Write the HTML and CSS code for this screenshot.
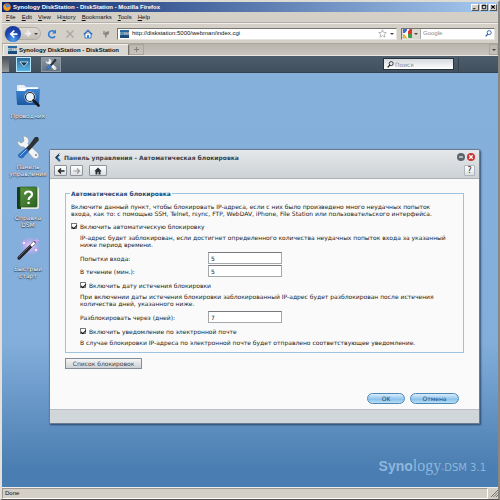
FILE: index.html
```html
<!DOCTYPE html>
<html lang="ru">
<head>
    <meta charset="UTF-8">
    <meta name="viewport" content="width=device-width, initial-scale=1.0">
    <title>Synology DiskStation - DiskStation</title>
    <link rel="stylesheet" href="styles.css">
</head>
<body>
    <!-- Shared icons -->
    <svg class="defs" aria-hidden="true">
        <defs>
            <linearGradient id="folder" x1="0" y1="0" x2="0" y2="1">
                <stop offset="0" stop-color="#3f86cf"/>
                <stop offset="1" stop-color="#1c57a4"/>
            </linearGradient>
            <linearGradient id="book" x1="0" y1="0" x2="1" y2="1">
                <stop offset="0" stop-color="#5d9540"/>
                <stop offset="1" stop-color="#2b6420"/>
            </linearGradient>
            <radialGradient id="glow">
                <stop offset="0" stop-color="#f2d5ff"/>
                <stop offset="1" stop-color="#c79cf0" stop-opacity="0"/>
            </radialGradient>
            <symbol id="tools" viewBox="0 0 24 24">
                <path d="M1 5l4 3 3-2-1-5q5 0 6 5l-1 3 10 9q2 3 0 5t-5 0L8 12q-6 1-7-7z" fill="#f1f4f6" stroke="#8b98a5" stroke-width=".7"/>
                <path d="M22 2l1 3-9 10-8 8q-3 0-4-3l8-7 4-4 5-7z" fill="#2d3238"/>
                <path d="M10 13l3 3-6 7q-4 1-5-3z" fill="#2a6fc2"/>
                <path d="M10.500 14.500L4 21" stroke="#8cc0f2"/>
                <circle cx="20" cy="20" r="1" fill="#778899"/>
            </symbol>
            <symbol id="search" viewBox="0 0 8 8">
                <circle cx="4.800" cy="3" r="2.300" fill="none" stroke="currentColor"/>
                <path d="M3.200 4.700L.8 7.300" stroke="currentColor" stroke-width="1.500"/>
            </symbol>
        </defs>
    </svg>

    <header class="browser">
        <div class="title-bar">
            <svg class="firefox" viewBox="0 0 8 8"><circle cx="4" cy="4" r="3.800" fill="#e66b10"/><circle cx="4.300" cy="3.300" r="2.200" fill="#4f8bd0"/><path d="M.5 2q2 0 2.600 2T7.500 3Q7.500 7.600 4 7.800.2 7.500.5 2z" fill="#f49a20"/></svg>
            <span class="title-text">Synology DiskStation - DiskStation - Mozilla Firefox</span>
            <div class="win-buttons">
                <button aria-label="Minimize"><svg viewBox="0 0 7 7"><path d="M1 5.500h3" stroke="#000"/></svg></button>
                <button aria-label="Maximize"><svg viewBox="0 0 7 7"><path d="M1.500 1.500h4v4h-4zM1 1.500h5" fill="none" stroke="#000"/></svg></button>
                <button aria-label="Close"><svg viewBox="0 0 7 7"><path d="M1.500 1.500l4 4m0-4l-4 4" stroke="#000" stroke-width="1.200"/></svg></button>
            </div>
        </div>

        <nav class="menu-bar">
            <a href="#"><u>F</u>ile</a>
            <a href="#"><u>E</u>dit</a>
            <a href="#"><u>V</u>iew</a>
            <a href="#">Hi<u>s</u>tory</a>
            <a href="#"><u>B</u>ookmarks</a>
            <a href="#"><u>T</u>ools</a>
            <a href="#"><u>H</u>elp</a>
        </nav>

        <div class="toolbar">
            <div class="history-buttons">
                <button class="back" aria-label="Back"><svg viewBox="0 0 16 16"><path d="M9.500 4L5.500 8l4 4M6 8h7" fill="none" stroke="#fff" stroke-width="2"/></svg></button>
                <button class="forward" aria-label="Forward"><svg viewBox="0 0 10 10"><path d="M2 5h5M5 2l3 3-3 3" fill="none" stroke="#eee" stroke-width="2"/></svg></button>
                <span class="caret"></span>
            </div>
            <button class="tool" aria-label="Reload"><svg viewBox="0 0 10 10"><path d="M8 7.200A3.500 3.500 0 1 1 7.500 2.600" fill="none" stroke="#2e7cd6" stroke-width="1.600"/><path d="M9 .5v4H5z" fill="#2e7cd6"/></svg></button>
            <button class="tool" aria-label="Stop"><svg viewBox="0 0 10 10"><path d="M1.500 1.500l7 7m0-7l-7 7" stroke="#a9a6a0" stroke-width="1.400"/></svg></button>
            <button class="tool" aria-label="Home"><svg viewBox="0 0 10 10"><path d="M2 5v4h6V5" fill="#fff" stroke="#3d7fd0"/><path d="M.8 5.500L5 1.500l4.200 4" fill="none" stroke="#2b6bc4" stroke-width="1.400"/><path d="M4 6h2v3H4z" fill="#3d7fd0"/></svg></button>
            <button class="tool" aria-label="Feed"><svg viewBox="0 0 10 10"><path d="M2 2l3 1 3-1v3L6 6 5 9 4 8V6L2 5z" fill="#8b8883"/><circle cx="3" cy="3" r="1.300" fill="#a9a6a0"/></svg></button>
            <div class="address">
                <span class="favicon">DSM</span>
                <input type="text" aria-label="Address" value="http://diskstation:5000/webman/index.cgi">
                <svg class="star" viewBox="0 0 10 10"><path d="M5 1l1.200 2.700 3 .3L7 6l.7 3L5 7.500 2.300 9 3 6 .8 4l3-.3z" fill="#fff" stroke="#8f8f8f" stroke-width=".7"/></svg>
                <span class="caret"></span>
            </div>
            <div class="web-search">
                <span class="engine">
                    <svg viewBox="0 0 9 9"><path d="M0 0h9v9H0z" fill="#fff"/><path d="M0 0h4v4H0z" fill="#3c6fd4"/><path d="M5 0h4v5H5z" fill="#d8382c"/><path d="M0 5l4 1v3H0z" fill="#efb32a"/><path d="M5 5h4v4H5z" fill="#3a9c4a"/><path d="M6 0L2 5l3 4" fill="none" stroke="#fff" stroke-width="1.300"/></svg>
                    <span class="caret"></span>
                </span>
                <input type="text" aria-label="Google" placeholder="Google">
                <svg class="glass" viewBox="0 0 8 8"><use href="#search"/></svg>
            </div>
        </div>

        <div class="tab-bar">
            <a class="tab" href="#"><span class="favicon">DSM</span>Synology DiskStation - DiskStation</a>
            <button class="new-tab" aria-label="New tab"><svg viewBox="0 0 7 7"><path d="M3.500 1v5M1 3.500h5" stroke="#85827c"/></svg></button>
            <button class="all-tabs" aria-label="All tabs"><span class="caret"></span></button>
        </div>
    </header>

    <div class="dsm-bar">
        <span class="grip"></span>
        <button class="main-menu" aria-label="Меню"><svg viewBox="0 0 10 8"><path d="M1 2h8L5 6.500z" fill="#0d3a5c" stroke="#fff" stroke-width=".7"/></svg></button>
        <button class="task" aria-label="Панель управления"><svg viewBox="0 0 24 24"><use href="#tools"/></svg></button>
        <label class="dsm-search">
            <svg viewBox="0 0 8 8"><use href="#search"/></svg>
            <input type="text" aria-label="Поиск" placeholder="Поиск">
        </label>
        <span class="bar-end"></span>
    </div>

    <main class="desktop">
        <div class="shortcuts">
            <a class="shortcut" href="#">
                <svg viewBox="0 0 24 24"><path d="M1 2q0-1 1-1h6l2 2h12v4H1z" fill="#e9eff6"/><path d="M3 4h18v5H3z" fill="#fff"/><path d="M0 7h9l2-2h13l-1 15q0 1-1 1H2q-1 0-1-1z" fill="url(#folder)"/><circle cx="14" cy="13" r="4.500" fill="#e8f4fd" stroke="#fff" stroke-width="2"/><circle cx="14" cy="13" r="4.500" fill="#e8f4fd" stroke="#202a36" stroke-width="1.200"/><path d="M17.500 16.500l5 5" stroke="#17191c" stroke-width="2.600" stroke-linecap="round"/></svg>
                <span>Проводник</span>
            </a>
            <a class="shortcut" href="#">
                <svg viewBox="0 0 24 24"><use href="#tools"/></svg>
                <span>Панель управления</span>
            </a>
            <a class="shortcut" href="#">
                <svg viewBox="0 0 24 24"><path d="M3 1h18q2 0 2 2v18q0 2-2 2H3z" fill="#e6e9df"/><path d="M2 1q-1 0-1 1v20q0 1 1 1h3V1z" fill="#173d16"/><path d="M4 1h16q1 0 1 1v18q0 1-1 1H4z" fill="url(#book)" stroke="#1f4c1b" stroke-width=".6"/><path d="M9 8.500Q9 5.500 12.500 5.500T16 8.500Q16 10 14 11.200 12.600 12 12.600 14M12.600 15.800v2.200" fill="none" stroke="#fff" stroke-width="2.200"/></svg>
                <span>Справка<br>DSM</span>
            </a>
            <a class="shortcut" href="#">
                <svg viewBox="0 0 24 24"><circle cx="14" cy="9" r="10" fill="url(#glow)"/><path d="M3 21L18 6" stroke="#25212c" stroke-width="3.200" stroke-linecap="round"/><path d="M15 9l3.500-3.500" stroke="#fff" stroke-width="2.600"/><path d="M2.500 20.500L14 9" stroke="#77717f" stroke-width=".7"/><path d="M8 3v6M5 6h6M20 10v6M17 13h6M21 1v5M18.500 3.500h5" stroke="#e0a0f6" stroke-width="1"/><circle cx="8" cy="6" r="1" fill="#fff"/><circle cx="20" cy="13" r="1" fill="#fff"/></svg>
                <span>Быстрый<br>старт</span>
            </a>
        </div>

        <section class="window">
            <header class="window-head">
                <div class="window-title">
                    <svg class="title-icon" viewBox="0 0 8 10"><path d="M6 1L2 5l4 4" fill="none" stroke="#1d3c5c" stroke-width="2"/><path d="M5 1l2 2" stroke="#fff"/><path d="M4 6l2 3" stroke="#2871c4" stroke-width="2"/></svg>
                    <h1>Панель управления - Автоматическая блокировка</h1>
                    <button class="round minimize" aria-label="Свернуть"><svg viewBox="0 0 8 8"><path d="M2 4h4" stroke="#eee" stroke-width="1.200"/></svg></button>
                    <button class="round close" aria-label="Закрыть"><svg viewBox="0 0 8 8"><path d="M2.300 2.300l3.400 3.400m0-3.400L2.300 5.700" stroke="#fff" stroke-width="1.300"/></svg></button>
                </div>
                <div class="window-nav">
                    <button aria-label="Назад"><svg viewBox="0 0 8 8"><path d="M7.500 4H2M4 1.500L1.500 4 4 6.500" fill="none" stroke="#222" stroke-width="1.400"/></svg></button>
                    <button aria-label="Вперед"><svg viewBox="0 0 8 8"><path d="M.5 4H6M4 1.500L6.500 4 4 6.500" fill="none" stroke="#999" stroke-width="1.200"/></svg></button>
                    <button class="home" aria-label="Домой"><svg viewBox="0 0 8 8"><path d="M4 .5L.3 4.300h1.200V7.500h2V5h1v2.500h2V4.300h1.200z" fill="#2c2f33"/></svg></button>
                    <button class="help" aria-label="Справка">?</button>
                </div>
            </header>

            <form class="window-body">
                <fieldset>
                    <legend>Автоматическая блокировка</legend>
                    <p>Включите данный пункт, чтобы блокировать IP-адреса, если с них было произведено много неудачных попыток входа, как то: с помощью SSH, Telnet, rsync, FTP, WebDAV, iPhone, File Station или пользовательского интерфейса.</p>
                    <label class="check"><input type="checkbox" checked>Включить автоматическую блокировку</label>
                    <div class="indent">
                        <p>IP-адрес будет заблокирован, если достигнет определенного количества неудачных попыток входа за указанный ниже период времени.</p>
                        <div class="field">
                            <label for="attempts">Попытки входа:</label>
                            <input type="text" id="attempts" value="5">
                        </div>
                        <div class="field">
                            <label for="minutes">В течение (мин.):</label>
                            <input type="text" id="minutes" value="5">
                        </div>
                        <label class="check"><input type="checkbox" checked>Включить дату истечения блокировки</label>
                        <p>При включении даты истечения блокировки заблокированный IP-адрес будет разблокирован после истечения количества дней, указанного ниже.</p>
                        <div class="field">
                            <label for="days">Разблокировать через (дней):</label>
                            <input type="text" id="days" value="7">
                        </div>
                        <label class="check"><input type="checkbox" checked>Включить уведомление по электронной почте</label>
                        <p>В случае блокировки IP-адреса по электронной почте будет отправлено соответствующее уведомление.</p>
                    </div>
                </fieldset>
                <button type="button" class="list-button">Список блокировок</button>
                <div class="actions">
                    <button type="button" class="pill">OK</button>
                    <button type="button" class="pill wide">Отмена</button>
                </div>
            </form>
            <footer class="window-foot"></footer>
        </section>

        <div class="brand"><b>Syno</b><span class="logy">logy</span><sup>®</sup><span class="version">DSM 3.1</span></div>
    </main>

    <footer class="status-bar">
        <span class="status-text">Done</span>
        <svg viewBox="0 0 8 8"><path d="M1 8l7-7M3.500 8L8 3.500M6 8l2-2" stroke="#77746e"/></svg>
    </footer>
</body>
</html>
```
FILE: styles.css
```css
* {
    box-sizing: border-box;
}

body {
    margin: 0;
    height: 100vh;
    display: flex;
    flex-direction: column;
    border: 2px solid #e4e1da;
    border-top-color: #dedbd4;
    border-right-color: #8a8781;
    border-bottom: 1px solid #55534f;
    background: #d4d0c8;
    color: #222;
    font-family: "DejaVu Sans", Verdana, sans-serif;
    font-size: 6px;
    line-height: 7px;
    overflow: hidden;
}

button,
input {
    font: inherit;
    color: inherit;
    margin: 0;
    padding: 0;
    border: 0;
    min-width: 0;
}

button {
    display: flex;
    align-items: center;
    justify-content: center;
    background: none;
}

a {
    color: inherit;
    text-decoration: none;
}

svg {
    display: block;
    flex: none;
}

.defs {
    position: absolute;
    width: 0;
    height: 0;
}

.caret {
    border: 2px solid transparent;
    border-top-color: #444;
    border-bottom: 0;
}

/* Browser */
.browser,
.status-bar {
    flex: none;
    font-family: "Liberation Sans", Tahoma, sans-serif;
    color: #111;
}

.title-bar {
    display: flex;
    align-items: center;
    gap: 2px;
    height: 10px;
    padding: 0 1px 0 1px;
    background: linear-gradient(90deg, #0c276c, #a6caf0);
    color: #fff;
    font-weight: bold;
}

.firefox {
    width: 8px;
    height: 8px;
}

.title-text {
    flex: 1;
}

.win-buttons {
    display: flex;
    gap: 1px;
}

.win-buttons button {
    width: 8px;
    height: 7px;
    background: #d4d0c8;
    border: 1px solid;
    border-color: #fff #555 #555 #fff;
}

.win-buttons svg {
    width: 6px;
    height: 6px;
}

.menu-bar {
    display: flex;
    align-items: center;
    gap: 6px;
    height: 11px;
    padding: 0 4px;
    border-bottom: 1px solid #b5b1a9;
}

.menu-bar u {
    text-underline-offset: 1px;
}

.toolbar {
    display: flex;
    align-items: center;
    gap: 8px;
    height: 20px;
    padding: 0 3px 0 2px;
    border-top: 1px solid #f0eeea;
}

.history-buttons {
    display: flex;
    align-items: center;
    gap: 2px;
    height: 13px;
    margin-right: -2px;
    padding-right: 2px;
    border: 1px solid #b1ada5;
    border-radius: 8px;
    background: linear-gradient(#dedbd5, #c2beb6);
}

.back {
    width: 16px;
    height: 16px;
    border-radius: 50%;
    background: radial-gradient(circle at 50% 85%, #4fa3f0, #1b48b4 50%, #16308a);
}

.back svg {
    width: 14px;
    height: 14px;
}

.forward svg {
    width: 9px;
    height: 9px;
}

.tool svg {
    width: 10px;
    height: 10px;
}

.address,
.web-search {
    display: flex;
    align-items: center;
    height: 12px;
    background: #fff;
    border: 1px solid;
    border-color: #77746f #e6e3de #e6e3de #77746f;
}

.address {
    flex: 1;
    gap: 3px;
    padding-right: 2px;
    margin-left: -2px;
}

.address input,
.web-search input {
    flex: 1;
    background: none;
}

.favicon {
    width: 9px;
    padding: 1px 0;
    background: linear-gradient(#2e6fa9, #174672);
    color: #fff;
    font-size: 4px;
    line-height: 6px;
    text-align: center;
}

.address .favicon {
    margin-left: 2px;
}

.star {
    width: 9px;
    height: 9px;
}

.web-search {
    width: 94px;
    gap: 2px;
    padding-right: 2px;
    margin-left: -4px;
}

.web-search .engine {
    display: flex;
    align-items: center;
    gap: 2px;
    height: 10px;
    padding: 0 2px 0 1px;
    background: #dcd9d2;
    border-right: 1px solid #aaa;
}

.engine svg {
    width: 9px;
    height: 9px;
}

.glass {
    width: 7px;
    height: 7px;
    color: #245cab;
}

::placeholder {
    color: #888;
    opacity: 1;
}

.tab-bar {
    display: flex;
    align-items: flex-end;
    height: 13px;
    background: linear-gradient(#b9b5ad, #c9c5bd);
    border-top: 1px solid #aaa69e;
    border-bottom: 1px solid #e9e7e2;
}

.tab {
    display: flex;
    align-items: center;
    gap: 2px;
    width: 126px;
    height: 11px;
    margin-left: 1px;
    padding-left: 4px;
    background: #dad7d0;
    border: 1px solid #f4f2ee;
    border-right-color: #77746f;
    border-bottom: 0;
    font-weight: bold;
    white-space: nowrap;
}

.new-tab,
.all-tabs {
    width: 15px;
    height: 11px;
    border: 1px solid #aaa69e;
}

.new-tab svg {
    width: 7px;
    height: 7px;
}

.all-tabs {
    width: 9px;
    margin-left: auto;
}

/* DSM top bar */
.dsm-bar {
    flex: none;
    display: flex;
    align-items: center;
    height: 17px;
    background: linear-gradient(#4d5d6c, #42505d);
    border-bottom: 1px solid #33404e;
}

.grip {
    width: 7px;
    height: 15px;
    background: linear-gradient(#4b5158, #969ba0);
}

.main-menu {
    width: 15px;
    height: 15px;
    margin-left: 7px;
    border: 1px solid #b6e4fa;
    background: linear-gradient(#296896, #56b6e8);
}

.main-menu svg {
    width: 10px;
    height: 8px;
}

.task {
    width: 20px;
    height: 15px;
    margin-left: 10px;
    border: 1px solid #8c98a3;
    background: linear-gradient(#8b969f, #68747f);
}

.task svg {
    width: 12px;
    height: 12px;
}

.dsm-search {
    display: flex;
    align-items: center;
    gap: 1px;
    width: 71px;
    height: 12px;
    margin-left: auto;
    padding-left: 3px;
    border: 1px solid #27323c;
    background: linear-gradient(#d5dade, #fff);
}

.dsm-search svg {
    width: 7px;
    height: 7px;
    color: #222;
}

.dsm-search input {
    flex: 1;
    background: none;
}

.bar-end {
    width: 40px;
    height: 13px;
    margin-left: 4px;
    border-left: 1px solid #34414d;
}

/* Desktop */
.desktop {
    position: relative;
    flex: 1;
    display: flex;
    justify-content: space-between;
    background: linear-gradient(#86b0dc, #83aedb 65%, #4a7db1 96%);
}

.shortcuts {
    width: 52px;
    padding-top: 11px;
}

.shortcut {
    display: flex;
    flex-direction: column;
    align-items: center;
    gap: 4px;
    height: 51px;
    color: #fff;
    text-align: center;
    text-shadow: 0 0 1px #234, 0 1px 1px #234;
}

.shortcut svg {
    width: 24px;
    height: 24px;
}

.shortcut span {
    width: 50px;
}

.brand {
    align-self: flex-end;
    display: flex;
    align-items: baseline;
    padding: 0 12px 11px 0;
    color: #8fb6dc;
    font-family: "Liberation Sans", Arial, sans-serif;
    font-size: 14px;
    line-height: 16px;
}

.logy {
    font-family: "Liberation Serif", serif;
    font-size: 16px;
}

.brand sup {
    font-size: 4px;
    line-height: 4px;
}

.version {
    font-family: "DejaVu Sans", sans-serif;
    font-size: 10px;
}

/* Control panel window */
.window {
    position: absolute;
    top: 76px;
    left: 47px;
    right: 18px;
    display: flex;
    flex-direction: column;
    background: #fafafa;
    border: 1px solid #6a7c90;
    border-radius: 2px 2px 0 0;
    box-shadow: 1px 1px 2px rgba(20, 40, 70, 0.7);
}

.window-head {
    height: 29px;
    padding: 1px 4px 0;
    background: linear-gradient(#e5e8ea, #cdd2d6);
    border-bottom: 1px solid #a9b0b6;
}

.window-title {
    display: flex;
    align-items: center;
    gap: 2px;
    height: 12px;
}

.title-icon {
    width: 8px;
    height: 9px;
}

.window-title h1 {
    flex: 1;
    margin: 0;
    color: #39434d;
    font-size: 6px;
    line-height: 7px;
}

.round {
    width: 8px;
    height: 8px;
    border-radius: 50%;
}

.round svg {
    width: 8px;
    height: 8px;
}

.minimize {
    background: #5d646b;
}

.close {
    background: #c93434;
}

.window-nav {
    display: flex;
    gap: 3px;
    padding-top: 2px;
}

.window-nav button {
    width: 13px;
    height: 11px;
    border: 1px solid #8c9399;
    border-radius: 1px;
    background: linear-gradient(#fff, #dcdfe2);
}

.window-nav svg {
    width: 8px;
    height: 8px;
}

.window-nav .home {
    width: 18px;
    margin-left: 3px;
}

.window-nav .help {
    width: 11px;
    margin-left: auto;
    border-color: #b0b6bb;
    font-size: 8px;
}

.window-body {
    padding: 11px 15px 5px;
}

fieldset {
    min-width: 0;
    margin: 0;
    padding: 3px 11px 2px 5px;
    border: 1px solid #9cc3df;
}

legend {
    padding: 0 1px;
    margin-left: -1px;
    color: #214d7a;
    font-weight: bold;
}

p {
    margin: 3px 0 4px;
}

.check {
    display: flex;
    align-items: center;
    gap: 3px;
    height: 10px;
    margin-top: 3px;
}

.check input {
    appearance: none;
    width: 6px;
    height: 6px;
    background: #fff;
    border: 1px solid #77797c;
    display: grid;
    place-items: center;
}

.check input:checked::before {
    content: "";
    width: 4px;
    height: 2px;
    border: solid #111;
    border-width: 0 0 1px 1px;
    transform: rotate(-45deg);
}

.indent {
    padding-left: 9px;
}

.field {
    display: grid;
    grid-template-columns: 128px 74px;
    align-items: center;
    margin-bottom: 1px;
}

.field input {
    height: 12px;
    padding: 0 2px;
    background: #fff;
    border: 1px solid #a3a8ac;
    border-top-color: #75797d;
}

.list-button {
    width: 77px;
    height: 11px;
    margin-top: 5px;
    border: 1px solid #858c94;
    background: linear-gradient(#f4f5f6, #cdd1d6);
    color: #444;
}

.actions {
    display: flex;
    justify-content: flex-end;
    gap: 5px;
    margin-top: 24px;
    padding-right: 5px;
}

.pill {
    width: 38px;
    height: 11px;
    border: 1px solid #4f86b4;
    border-radius: 6px;
    background: linear-gradient(#d9edfb, #8cc2ec 60%, #b9dff8);
    color: #1f466b;
}

.wide {
    width: 49px;
}

.window-foot {
    height: 14px;
    background: #d0d6da;
    border-top: 1px solid #b8bec3;
}

/* Status bar */
.status-bar {
    display: flex;
    align-items: center;
    gap: 2px;
    height: 12px;
    padding-bottom: 1px;
    border-top: 1px solid #f1efeb;
}

.status-text {
    flex: 1;
    padding: 1px 2px;
    border: 1px solid;
    border-color: #9b9790 #fff #fff #9b9790;
}

.status-bar svg {
    width: 8px;
    height: 8px;
}
```
